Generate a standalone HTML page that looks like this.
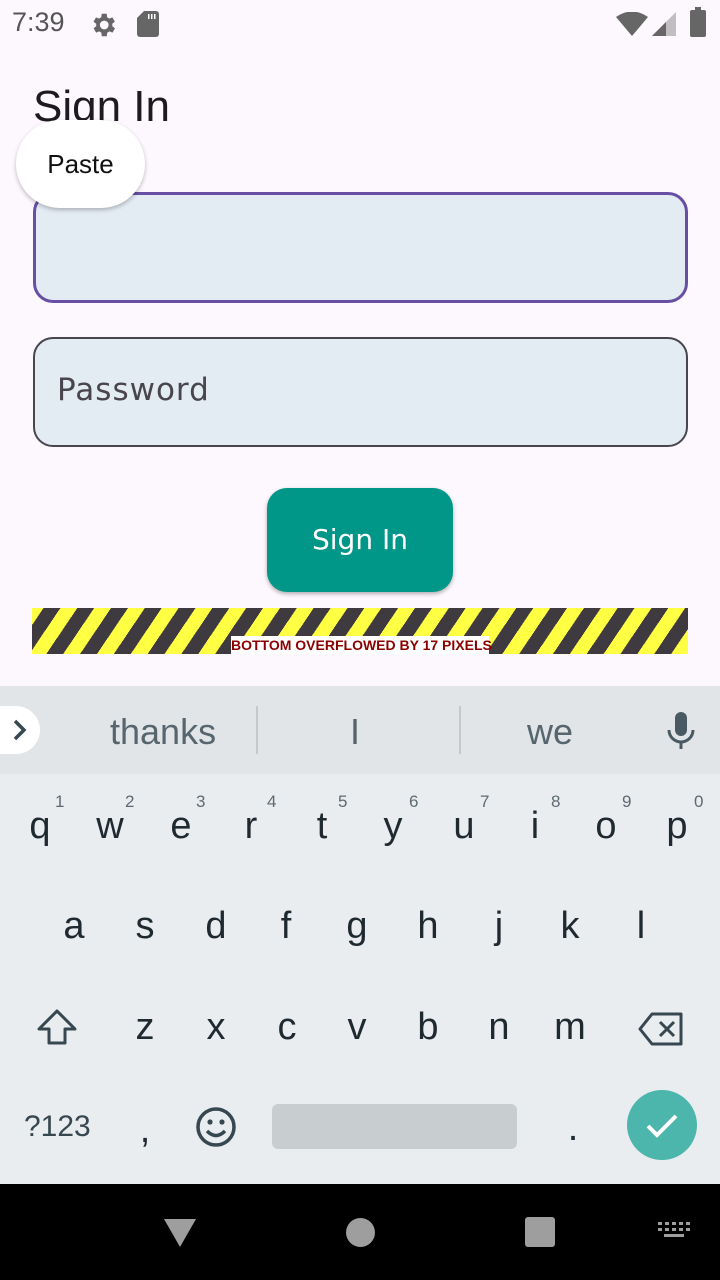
<!DOCTYPE html>
<html><head><meta charset="utf-8"><style>
*{margin:0;padding:0;box-sizing:border-box}
body{width:720px;height:1280px;position:relative;overflow:hidden;background:#fdf7fe;font-family:"Liberation Sans",sans-serif}
.a{position:absolute}
.k{position:absolute;width:60px;margin-left:-30px;text-align:center;font-size:38px;color:#1f2a30;line-height:40px}
.n{position:absolute;font-size:17px;color:#5f6a70}
</style></head><body>
<div class="a" style="left:12px;top:7px;font-size:27px;color:#555">7:39</div>
<svg class="a" style="left:88px;top:10px" width="30" height="30" viewBox="0 0 24 24"><path fill="#666" d="M19.4 13a7.5 7.5 0 000-2l2.1-1.6-2-3.5-2.5 1a7 7 0 00-1.7-1L15 3h-4l-.4 2.9a7 7 0 00-1.7 1l-2.5-1-2 3.5L6.6 11a7.5 7.5 0 000 2l-2.1 1.6 2 3.5 2.5-1a7 7 0 001.7 1L11 21h4l.4-2.9a7 7 0 001.7-1l2.5 1 2-3.5zM13 15.5a3.5 3.5 0 110-7 3.5 3.5 0 010 7z"/></svg>
<svg class="a" style="left:137px;top:11px" width="22" height="26" viewBox="0 0 22 26"><path fill="#666" d="M7 0h12a3 3 0 013 3v20a3 3 0 01-3 3H3a3 3 0 01-3-3V7z"/><path fill="#fff" d="M11 3h1.5v5H11zM14 3h1.5v5H14zM17 3h1.5v5H17z"/></svg>
<svg class="a" style="left:616px;top:12px" width="32" height="24" viewBox="0 0 32 24"><path fill="#666" d="M0 5Q16-6 32 5L16 24z"/></svg>
<svg class="a" style="left:652px;top:12px" width="24" height="24"><path fill="#666" d="M24 0V24H0z" opacity=".4"/><path fill="#666" d="M14 10V24H0z"/></svg>
<div class="a" style="left:690px;top:10px;width:16px;height:27px;background:#666;border-radius:2px"></div>
<div class="a" style="left:695px;top:7px;width:6px;height:4px;background:#666"></div>

<div class="a" style="left:33px;top:80px;font-size:44px;color:#1d1b20;height:42px;overflow:hidden;line-height:54px">Sign In</div>
<div class="a" style="left:33px;top:192px;width:655px;height:111px;border:3px solid #6750a4;border-radius:20px;background:#e3ebf3"></div>
<div class="a" style="left:16px;top:120px;width:129px;height:88px;border-radius:44px;background:#fff;box-shadow:0 2px 4px rgba(0,0,0,.25);font-size:26px;text-align:center;line-height:88px;color:#111">Paste</div>
<div class="a" style="left:33px;top:337px;width:655px;height:110px;border:2px solid #49454f;border-radius:20px;background:#e3ebf3"></div>
<div class="a" style="left:57px;top:372px;font-size:31px;color:#49454f;font-family:'DejaVu Sans',sans-serif;letter-spacing:1px">Password</div>
<div class="a" style="left:267px;top:488px;width:186px;height:104px;border-radius:20px;background:#009688;box-shadow:0 2px 4px rgba(0,0,0,.3);color:#fff;font-size:28px;text-align:center;line-height:104px;font-family:'DejaVu Sans',sans-serif">Sign In</div>
<div class="a" style="left:32px;top:608px;width:656px;height:46px;background:repeating-linear-gradient(-56deg,#ffff44 0 14px,#3e3a40 14px 28px)"></div>
<div class="a" style="left:231px;top:636px;height:18px;background:#fff;color:#8b0000;font-weight:bold;font-size:14px;line-height:18px;width:258px;text-align:center;white-space:nowrap">BOTTOM OVERFLOWED BY 17 PIXELS</div>

<div class="a" style="left:0;top:686px;width:720px;height:88px;background:#e1e5e8"></div>
<div class="a" style="left:0;top:774px;width:720px;height:410px;background:#e9edf0"></div>
<div class="a" style="left:0;top:706px;width:40px;height:48px;background:#fff;border-radius:0 24px 24px 0"></div>
<svg class="a" style="left:10px;top:718px" width="20" height="24"><path d="M5 3l9 9-9 9" stroke="#37474f" stroke-width="3.5" fill="none"/></svg>
<div class="a" style="left:110px;top:711px;font-size:36px;color:#56656e">thanks</div>
<div class="a" style="left:256px;top:706px;width:2px;height:48px;background:#c4c9cc"></div>
<div class="a" style="left:350px;top:711px;font-size:36px;color:#56656e">I</div>
<div class="a" style="left:459px;top:706px;width:2px;height:48px;background:#c4c9cc"></div>
<div class="a" style="left:527px;top:711px;font-size:36px;color:#56656e">we</div>
<svg class="a" style="left:664px;top:710px" width="34" height="40" viewBox="0 0 34 40"><rect x="11" y="2" width="12" height="24" rx="6" fill="#4a5a63"/><path d="M5 20a12 12 0 0024 0" stroke="#4a5a63" stroke-width="3" fill="none"/><path d="M17 32v7" stroke="#4a5a63" stroke-width="3"/></svg>

<div class="k" style="left:40px;top:806px">q</div><div class="k" style="left:110px;top:806px">w</div><div class="k" style="left:181px;top:806px">e</div><div class="k" style="left:251px;top:806px">r</div><div class="k" style="left:322px;top:806px">t</div><div class="k" style="left:393px;top:806px">y</div><div class="k" style="left:464px;top:806px">u</div><div class="k" style="left:535px;top:806px">i</div><div class="k" style="left:606px;top:806px">o</div><div class="k" style="left:677px;top:806px">p</div>
<div class="n" style="left:55px;top:792px">1</div><div class="n" style="left:125px;top:792px">2</div><div class="n" style="left:196px;top:792px">3</div><div class="n" style="left:267px;top:792px">4</div><div class="n" style="left:338px;top:792px">5</div><div class="n" style="left:409px;top:792px">6</div><div class="n" style="left:480px;top:792px">7</div><div class="n" style="left:551px;top:792px">8</div><div class="n" style="left:622px;top:792px">9</div><div class="n" style="left:694px;top:792px">0</div>
<div class="k" style="left:74px;top:906px">a</div><div class="k" style="left:145px;top:906px">s</div><div class="k" style="left:216px;top:906px">d</div><div class="k" style="left:286px;top:906px">f</div><div class="k" style="left:357px;top:906px">g</div><div class="k" style="left:428px;top:906px">h</div><div class="k" style="left:499px;top:906px">j</div><div class="k" style="left:570px;top:906px">k</div><div class="k" style="left:641px;top:906px">l</div>
<div class="k" style="left:145px;top:1007px">z</div><div class="k" style="left:216px;top:1007px">x</div><div class="k" style="left:287px;top:1007px">c</div><div class="k" style="left:357px;top:1007px">v</div><div class="k" style="left:428px;top:1007px">b</div><div class="k" style="left:499px;top:1007px">n</div><div class="k" style="left:570px;top:1007px">m</div>
<svg class="a" style="left:36px;top:1008px" width="42" height="40" viewBox="0 0 42 40"><path d="M21 3L3 21h10v14h16V21h10z" stroke="#37474f" stroke-width="3" fill="none" stroke-linejoin="round"/></svg>
<svg class="a" style="left:638px;top:1012px" width="46" height="34" viewBox="0 0 46 34"><path d="M14 2h29v30H14L2 17z" stroke="#37474f" stroke-width="3" fill="none" stroke-linejoin="round"/><path d="M22 10l14 14M36 10L22 24" stroke="#37474f" stroke-width="3"/></svg>
<div class="a" style="left:24px;top:1110px;font-size:30px;color:#37474f">?123</div>
<div class="k" style="left:145px;top:1110px">,</div>
<svg class="a" style="left:195px;top:1106px" width="42" height="42" viewBox="0 0 42 42"><circle cx="21" cy="21" r="18" stroke="#37474f" stroke-width="3.5" fill="none"/><circle cx="15" cy="16" r="2.6" fill="#37474f"/><circle cx="27" cy="16" r="2.6" fill="#37474f"/><path d="M12 25q9 9 18 0" stroke="#37474f" stroke-width="3.5" fill="none"/></svg>
<div class="a" style="left:272px;top:1104px;width:245px;height:45px;background:#c8cdd0;border-radius:6px"></div>
<div class="k" style="left:573px;top:1108px">.</div>
<div class="a" style="left:627px;top:1090px;width:70px;height:70px;border-radius:50%;background:#4db6ac"></div>
<svg class="a" style="left:644px;top:1108px" width="36" height="36"><path d="M4 18l9 9L32 8" stroke="#fff" stroke-width="4" fill="none"/></svg>

<div class="a" style="left:0;top:1184px;width:720px;height:96px;background:#000"></div>
<svg class="a" style="left:163px;top:1218px" width="34" height="30"><path d="M1 1h32L17 29z" fill="#9e9e9e"/></svg>
<div class="a" style="left:346px;top:1218px;width:29px;height:29px;border-radius:50%;background:#9e9e9e"></div>
<div class="a" style="left:525px;top:1217px;width:30px;height:30px;border-radius:3px;background:#9e9e9e"></div>
<svg class="a" style="left:658px;top:1222px" width="32" height="20"><g fill="#9e9e9e"><rect x="0" y="0" width="4" height="3"/><rect x="7" y="0" width="4" height="3"/><rect x="14" y="0" width="4" height="3"/><rect x="21" y="0" width="4" height="3"/><rect x="28" y="0" width="4" height="3"/><rect x="0" y="6" width="4" height="3"/><rect x="7" y="6" width="4" height="3"/><rect x="14" y="6" width="4" height="3"/><rect x="21" y="6" width="4" height="3"/><rect x="28" y="6" width="4" height="3"/><rect x="6" y="12" width="20" height="3"/></g></svg>
</body></html>
